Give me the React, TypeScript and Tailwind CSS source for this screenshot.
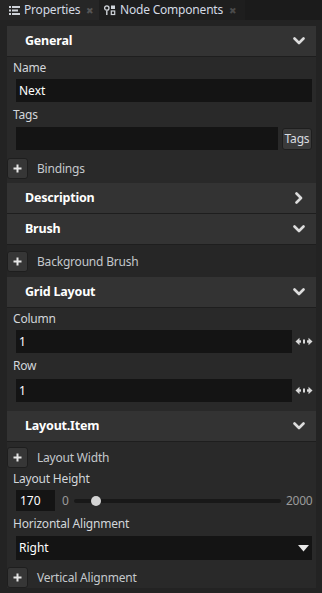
import React from "react";

const font = { fontFamily: '"Noto Sans", "Open Sans", sans-serif' };

function ChevronDown() {
  return (
    <svg width="12" height="8" viewBox="0 0 12 8">
      <path d="M1.5 1.5 L6 6 L10.5 1.5" fill="none" stroke="#dcdcdc" strokeWidth="2.6" strokeLinecap="round" strokeLinejoin="round" />
    </svg>
  );
}

function ChevronRight() {
  return (
    <svg width="8" height="12" viewBox="0 0 8 12">
      <path d="M1.5 1.5 L6 6 L1.5 10.5" fill="none" stroke="#dcdcdc" strokeWidth="2.6" strokeLinecap="round" strokeLinejoin="round" />
    </svg>
  );
}

function Header({ title, open = true }: { title: string; open?: boolean }) {
  return (
    <div className="h-[31px] bg-[#333333] border-b border-[#1e1e1e] flex items-center justify-between pl-[18px] pr-[11px] shrink-0">
      <span className="text-[12.5px] font-bold text-white tracking-[-0.2px]">{title}</span>
      <span className="w-[12px] flex justify-center">{open ? <ChevronDown /> : <ChevronRight />}</span>
    </div>
  );
}

function PlusRow({ label }: { label: string }) {
  return (
    <div className="flex items-center h-[21px]">
      <div className="w-[21px] h-[21px] bg-[#363636] border border-[#1e1e1e] rounded-[3px] flex items-center justify-center">
        <svg width="9" height="9" viewBox="0 0 9 9">
          <path d="M4.5 0.5 V8.5 M0.5 4.5 H8.5" stroke="#e6e6e6" strokeWidth="2" />
        </svg>
      </div>
      <span className="ml-[9px] text-[12px] text-[#c4c8cc] tracking-[-0.2px]">{label}</span>
    </div>
  );
}

function Label({ text, h }: { text: string; h: string }) {
  return (
    <div className={`${h} flex items-center pl-[6px] text-[12px] text-[#d2d6da] tracking-[-0.2px]`}>{text}</div>
  );
}

function ArrowsIcon() {
  return (
    <svg width="18" height="9" viewBox="0 0 18 9">
      <path d="M0.5 4.5 L4.5 0.8 V8.2 Z" fill="#d8d8d8" />
      <rect x="4" y="3.3" width="2" height="2.4" fill="#d8d8d8" />
      <rect x="8" y="2.5" width="2" height="4" fill="#d8d8d8" />
      <rect x="12" y="3.3" width="2" height="2.4" fill="#d8d8d8" />
      <path d="M17.5 4.5 L13.5 0.8 V8.2 Z" fill="#d8d8d8" />
    </svg>
  );
}

export default function App() {
  return (
    <div className="w-[322px] h-[593px] bg-[#232323] overflow-hidden flex flex-col" style={font}>
      {/* Tab bar */}
      <div className="h-[20px] bg-[#1b1b1b] flex shrink-0">
        <div className="w-[99px] bg-[#262626] flex items-center pl-[9px] whitespace-nowrap">
          <svg width="11" height="9" viewBox="0 0 11 9" className="shrink-0">
            <rect x="0" y="0" width="2" height="2" fill="#d0d4da" />
            <rect x="3" y="0" width="8" height="2" fill="#d0d4da" />
            <rect x="0" y="3.5" width="2" height="2" fill="#d0d4da" />
            <rect x="3" y="3.5" width="6" height="2" fill="#d0d4da" />
            <rect x="0" y="7" width="2" height="2" fill="#d0d4da" />
            <rect x="3" y="7" width="8" height="2" fill="#d0d4da" />
          </svg>
          <span className="ml-[4px] w-[58px] text-[12px] text-[#d4dae4] leading-none tracking-[-0.2px]">Properties</span>
          <span className="ml-[4px] text-[9px] text-[#555555] leading-none">✖</span>
        </div>
        <div className="w-[146px] bg-[#1e1e1e] flex items-center pl-[5px] whitespace-nowrap">
          <svg width="12" height="11" viewBox="0 0 12 11" className="shrink-0">
            <circle cx="2.8" cy="3" r="2.2" fill="none" stroke="#d0d4da" strokeWidth="1.3" />
            <rect x="2.1" y="5.5" width="1.4" height="4.5" fill="#d0d4da" />
            <rect x="7" y="0.5" width="4" height="3.5" fill="#d0d4da" />
            <rect x="7.3" y="6" width="3.4" height="3.5" fill="none" stroke="#d0d4da" strokeWidth="1.2" />
          </svg>
          <span className="ml-[4px] w-[105px] text-[12px] text-[#d4dae4] leading-none tracking-[-0.2px]">Node Components</span>
          <span className="ml-[4px] text-[9px] text-[#4a4a4a] leading-none">✖</span>
        </div>
      </div>

      {/* Panel */}
      <div className="flex flex-col pt-[6px] pl-[7px] pr-[6px]">
        {/* General */}
        <Header title="General" />
        <div className="bg-[#292929] flex flex-col">
          <Label text="Name" h="h-[22px]" />
          <div className="ml-[9px] mr-[4px] h-[23px] bg-[#141414] flex items-center pl-[3px] text-[12px] text-white">Next</div>
          <Label text="Tags" h="h-[25px]" />
          <div className="flex items-center">
            <div className="ml-[9px] w-[262px] h-[23px] bg-[#141414]" />
            <div className="ml-[4px] w-[30px] h-[22px] bg-[#3a3a3a] border border-[#1e1e1e] rounded-[3px] flex items-center justify-center text-[12px] text-[#d8dce0] tracking-[-0.2px]">Tags</div>
          </div>
          <div className="pt-[8px] pb-[4px]">
            <PlusRow label="Bindings" />
          </div>
        </div>

        {/* Description */}
        <Header title="Description" open={false} />

        {/* Brush */}
        <Header title="Brush" />
        <div className="bg-[#262626] py-[6px] h-[32px]">
          <PlusRow label="Background Brush" />
        </div>

        {/* Grid Layout */}
        <Header title="Grid Layout" />
        <div className="bg-[#292929] flex flex-col pb-[9px]">
          <Label text="Column" h="h-[22px]" />
          <div className="flex items-center">
            <div className="ml-[9px] w-[276px] h-[23px] bg-[#141414] flex items-center pl-[3px] text-[12px] text-white">1</div>
            <span className="ml-[3px]"><ArrowsIcon /></span>
          </div>
          <Label text="Row" h="h-[26px]" />
          <div className="flex items-center">
            <div className="ml-[9px] w-[276px] h-[23px] bg-[#141414] flex items-center pl-[3px] text-[12px] text-white">1</div>
            <span className="ml-[3px]"><ArrowsIcon /></span>
          </div>
        </div>

        {/* Layout.Item */}
        <Header title="Layout.Item" />
        <div className="bg-[#292929] flex flex-col pt-[5px]">
          <PlusRow label="Layout Width" />
          <Label text="Layout Height" h="h-[22px]" />
          <div className="flex items-center h-[21px]">
            <div className="ml-[9px] w-[39px] h-[21px] bg-[#141414] flex items-center pl-[4px] text-[12px] text-white">170</div>
            <span className="ml-[7px] text-[12px] text-[#9a9a9a]">0</span>
            <div className="ml-[5px] w-[207px] h-[4px] rounded-full bg-[#181818] relative">
              <div className="absolute left-[17px] top-[-3px] w-[10px] h-[10px] rounded-full bg-[#d4d4d4]" />
            </div>
            <span className="ml-[5px] text-[12px] text-[#9a9a9a] tracking-[-0.2px]">2000</span>
          </div>
          <Label text="Horizontal Alignment" h="h-[25px]" />
          <div className="ml-[9px] mr-[4px] h-[24px] bg-[#141414] flex items-center justify-between pl-[3px] pr-[3px] text-[12px] text-white">
            <span>Right</span>
            <svg width="11" height="7" viewBox="0 0 11 7">
              <path d="M0 0 H11 L5.5 6.5 Z" fill="#e8e8e8" />
            </svg>
          </div>
          <div className="pt-[7px]">
            <PlusRow label="Vertical Alignment" />
          </div>
        </div>
      </div>
    </div>
  );
}
